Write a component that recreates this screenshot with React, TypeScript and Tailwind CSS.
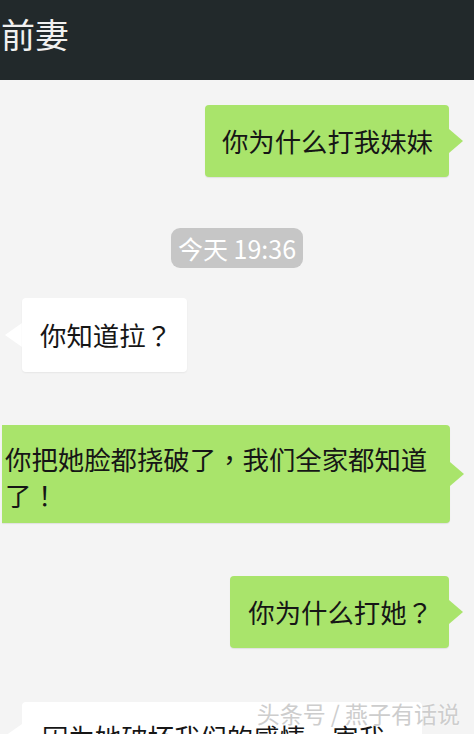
import React from "react";

const font = "font-['Noto_Sans_CJK_SC','Noto_Sans',sans-serif]";

// full-width punctuation sits centred in the reference
const P = ({ children }: { children: React.ReactNode }) => (
  <span className="font-['Noto_Sans_CJK_TC',sans-serif]">{children}</span>
);

const GreenArrow = () => (
  <div className="w-0 h-0 border-y-[12px] border-y-transparent border-l-[14px] border-l-[#a9e46b]" />
);

const WhiteArrow = () => (
  <div className="w-0 h-0 border-y-[12px] border-y-transparent border-r-[17px] border-r-white" />
);

const App = () => {
  return (
    <div className={`relative h-[734px] w-full overflow-hidden bg-[#f4f4f4] ${font}`}>
      {/* top bar */}
      <header className="h-[80px] bg-[#22292b] flex items-center pl-[1px] pb-[12px]">
        <h1 className="text-[34px] leading-none text-[#f1f1f1]">前妻</h1>
      </header>

      <main className="flex flex-col pt-[25px] text-[26.4px] leading-[36px] text-[#161616]">
        {/* me */}
        <div className="flex justify-end items-center pr-[11px]">
          <div className="bg-[#a9e46b] rounded-[4px] py-[18px] pl-[17px] pr-[16px] shadow-[0_1px_1px_rgba(0,0,0,0.08)]">
            你为什么打我妹妹
          </div>
          <GreenArrow />
        </div>

        {/* time */}
        <div className="flex justify-center mt-[51px]">
          <span className="bg-[#c6c6c6] text-white rounded-[9px] h-[40px] px-[7px] flex items-center text-[25px] leading-none">
            今天 19:36
          </span>
        </div>

        {/* her */}
        <div className="flex items-center pl-[5px] mt-[30px]">
          <WhiteArrow />
          <div className="bg-white rounded-[4px] py-[19px] pl-[18px] pr-[15px] shadow-[0_1px_2px_rgba(0,0,0,0.06)]">
            你知道拉<P>？</P>
          </div>
        </div>

        {/* me, long */}
        <div className="flex justify-end items-center pr-[10px] mt-[53px]">
          <div className="w-[448px] bg-[#a9e46b] rounded-r-[4px] pt-[16px] pb-[10px] pl-[3px] pr-[20px] shadow-[0_1px_1px_rgba(0,0,0,0.08)]">
            你把她脸都挠破了<P>，</P>我们全家都知道了<P>！</P>
          </div>
          <GreenArrow />
        </div>

        {/* me */}
        <div className="flex justify-end items-center pr-[11px] mt-[53px]">
          <div className="bg-[#a9e46b] rounded-[4px] py-[18px] pl-[18px] pr-[16px] shadow-[0_1px_1px_rgba(0,0,0,0.08)]">
            你为什么打她<P>？</P>
          </div>
          <GreenArrow />
        </div>

        {/* her, cut off by the screen edge */}
        <div className="flex items-start pl-[5px] mt-[54px]">
          <div className="mt-[22px]">
            <WhiteArrow />
          </div>
          <div className="w-[400px] bg-white rounded-[4px] pt-[17px] pb-[18px] pl-[20px] pr-[24px]">
            因为她破坏我们的感情<P>，</P>害我被大家骂了好久<P>。</P>
          </div>
        </div>
      </main>

      {/* watermark */}
      <div className="absolute right-[14px] top-[702px] text-[23px] leading-none text-[#cdcdcd] [text-shadow:0_0_2px_#ffffff]">
        头条号 / 燕子有话说
      </div>
    </div>
  );
};

export default App;
